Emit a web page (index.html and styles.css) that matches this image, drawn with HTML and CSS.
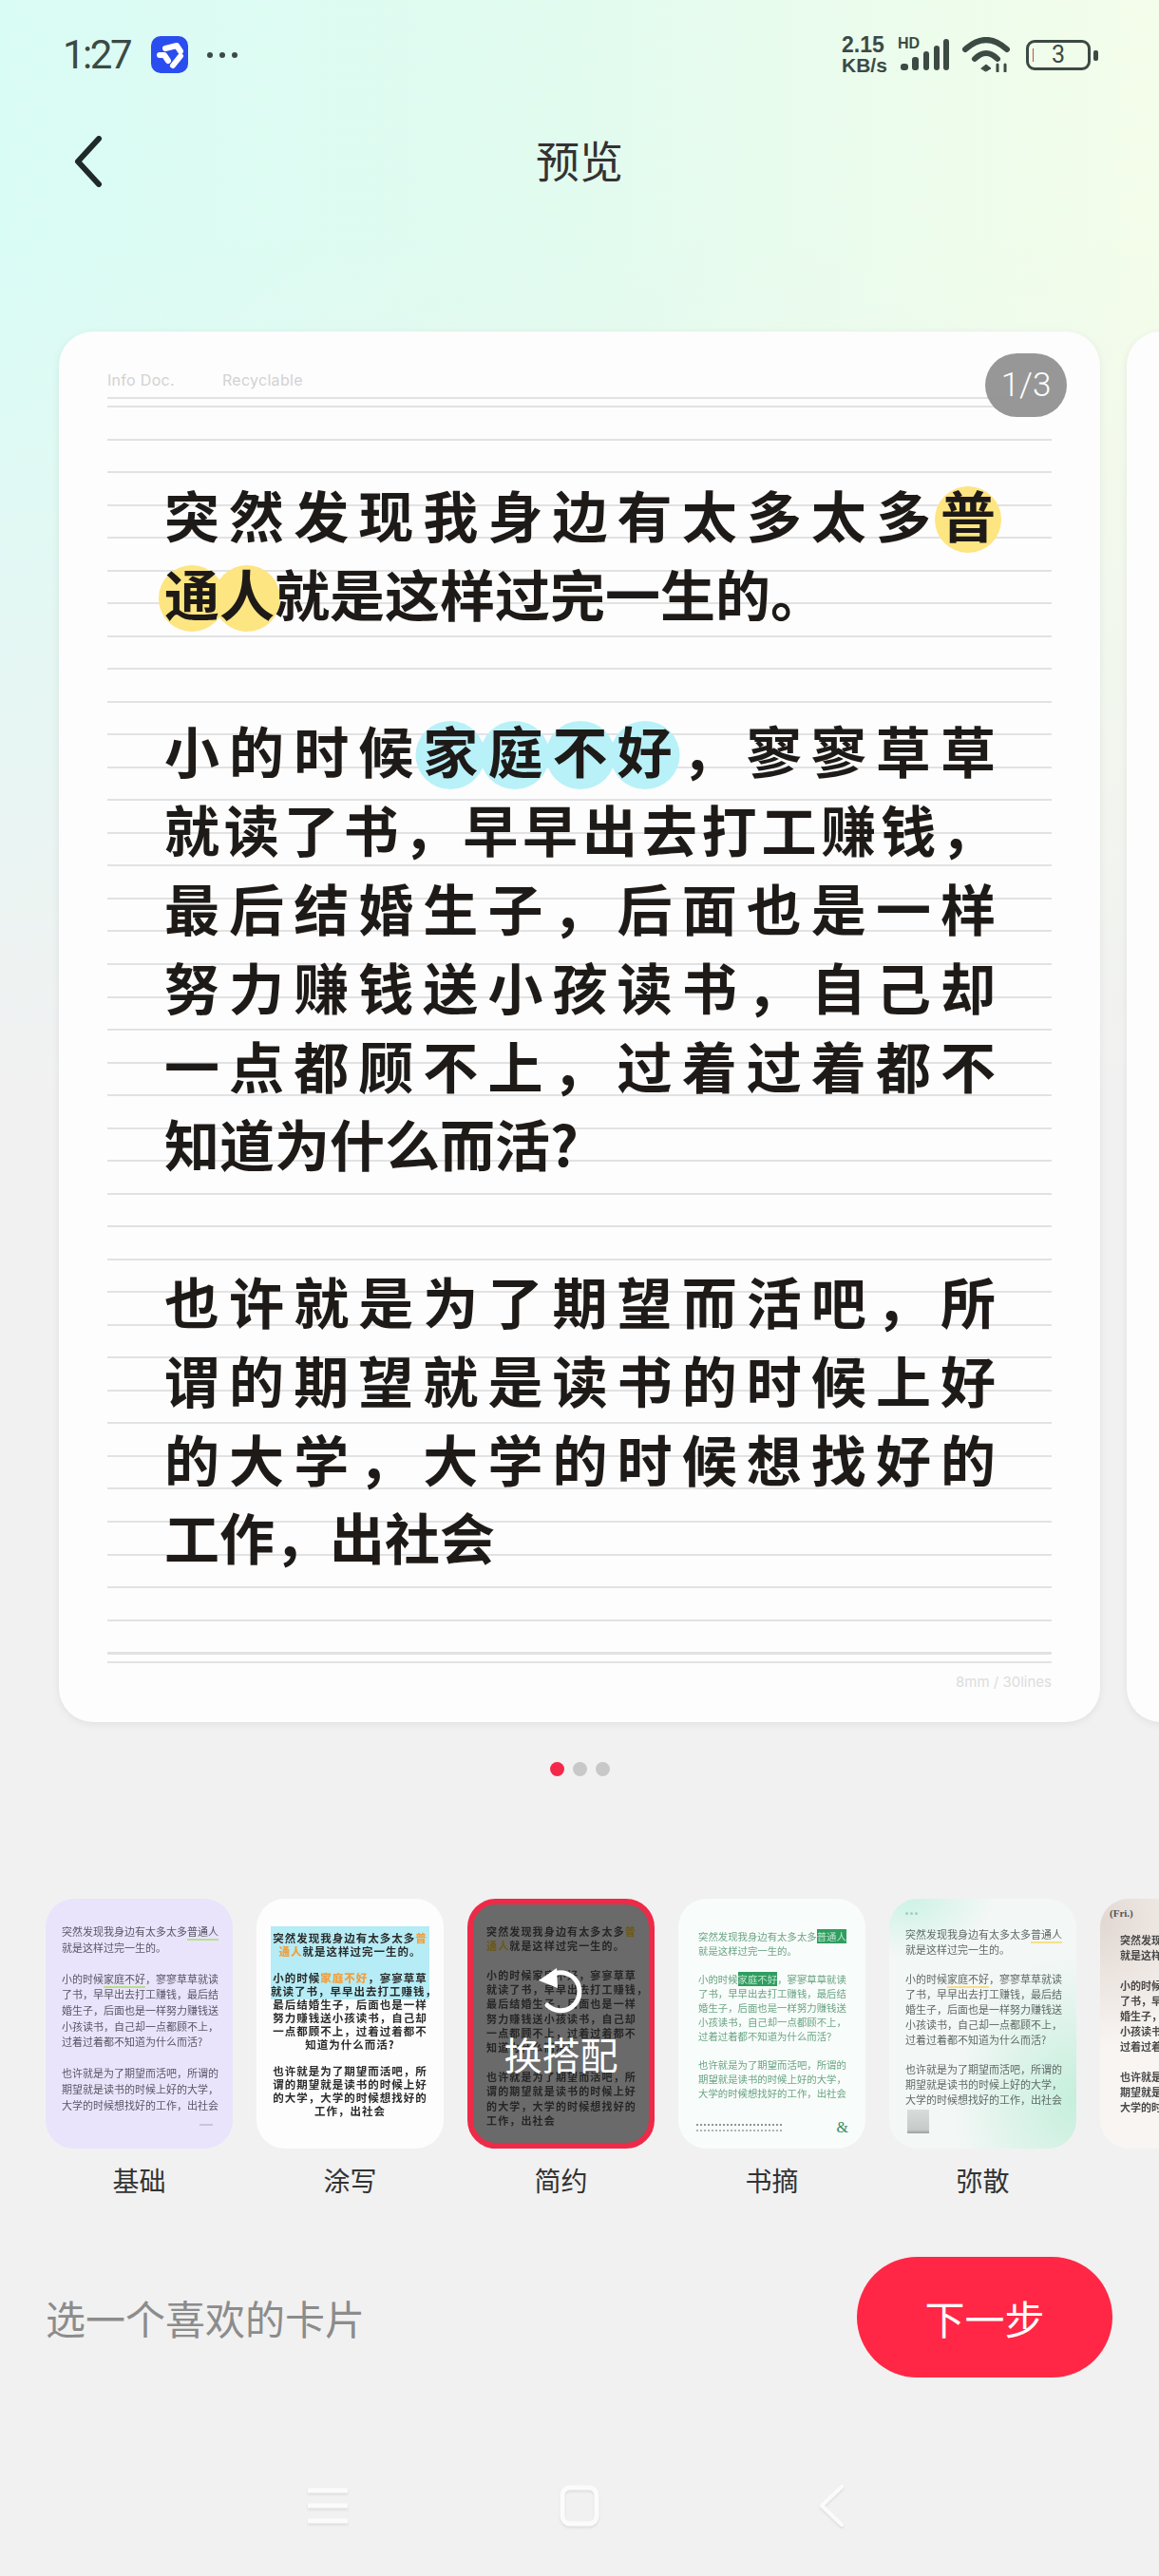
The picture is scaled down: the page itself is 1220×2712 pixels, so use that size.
FILE: index.html
```html
<!DOCTYPE html>
<html lang="zh-CN">
<head>
    <meta charset="UTF-8">
    <meta name="viewport" content="width=device-width, initial-scale=1.0">
    <title>预览</title>
    <link rel="stylesheet" href="styles.css">
</head>
<body>
    <div class="page">
        <div class="statusbar">
            <span class="time">1:27</span>
            <svg class="app-icon" width="39" height="39" viewBox="0 0 39 39">
                <rect width="39" height="39" rx="10" fill="#2a4df0"/>
                <path d="M15 13 L27 10 L31 16" fill="none" stroke="#fff" stroke-width="6" stroke-linejoin="round" stroke-linecap="round"/>
                <path d="M9 20 L14 20 L18 26" fill="none" stroke="#fff" stroke-width="6" stroke-linejoin="round" stroke-linecap="round"/>
                <path d="M31 21 L23 31" fill="none" stroke="#fff" stroke-width="6" stroke-linecap="round"/>
            </svg>
            <div class="more-dots"><i></i><i></i><i></i></div>
            <div class="status-right">
                <div class="speed">2.15<br><span>KB/s</span></div>
                <div class="signal">
                    <span class="hd">HD</span>
                    <svg width="52" height="33" viewBox="0 0 52 33" fill="#3c4a44">
                        <rect x="0" y="26" width="8" height="7" rx="3"/>
                        <rect x="12" y="19" width="7" height="14" rx="3"/>
                        <rect x="24" y="13" width="6" height="20" rx="3"/>
                        <rect x="35" y="7" width="6" height="26" rx="3"/>
                        <rect x="45" y="0" width="6" height="33" rx="3"/>
                    </svg>
                </div>
                <svg class="wifi" width="50" height="37" viewBox="0 0 50 37" fill="none" stroke="#3c4a44" stroke-linecap="round">
                    <path d="M3 13 Q25 -7 47 13" stroke-width="6"/>
                    <path d="M13 23 Q25 11 37 23" stroke-width="6"/>
                    <path d="M20 33 L25 29 L30 33 L25 36 Z" fill="#3c4a44" stroke-width="1"/>
                    <path d="M37 29 L37 36 M45 29 L45 36" stroke-width="3"/>
                </svg>
                <div class="battery">
                    <i class="battery-level"></i>
                    <span>3</span>
                </div>
            </div>
        </div>

        <div class="topbar">
            <svg class="back" width="32" height="54" viewBox="0 0 32 54" fill="none" stroke="#1f2a28" stroke-width="6" stroke-linecap="round" stroke-linejoin="round">
                <path d="M27 3 L5 27 L27 51"/>
            </svg>
            <div class="title">预览</div>
        </div>

        <div class="carousel">
            <div class="card">
                <div class="badge">1/3</div>
                <div class="meta"><span>Info Doc.</span><span>Recyclable</span></div>
                <div class="sheet">
                    <div class="ruled">
                        <p>
                            <span class="line">突然发现我身边有太多太多<span class="hl yellow">普</span></span>
                            <span class="line last"><span class="hl yellow">通</span><span class="hl yellow">人</span>就是这样过完一生的。</span>
                        </p>
                        <p>
                            <span class="line">小的时候<span class="hl blue">家</span><span class="hl blue">庭</span><span class="hl blue">不</span><span class="hl blue">好</span>，寥寥草草</span>
                            <span class="line">就读了书，早早出去打工赚钱，</span>
                            <span class="line">最后结婚生子，后面也是一样</span>
                            <span class="line">努力赚钱送小孩读书，自己却</span>
                            <span class="line">一点都顾不上，过着过着都不</span>
                            <span class="line last">知道为什么而活?</span>
                        </p>
                        <p>
                            <span class="line">也许就是为了期望而活吧，所</span>
                            <span class="line">谓的期望就是读书的时候上好</span>
                            <span class="line">的大学，大学的时候想找好的</span>
                            <span class="line last">工作，出社会</span>
                        </p>
                    </div>
                </div>
                <div class="card-foot">8mm / 30lines</div>
            </div>
            <div class="card"></div>
        </div>

        <div class="dots"><i class="on"></i><i></i><i></i></div>

        <div class="thumbs">
            <div class="thumb-item">
                <div class="thumb thumb-basic">
                    <p class="thumb-text">突然发现我身边有太多太多<u>普通人</u><br>就是这样过完一生的。<br><br>小的时候<u>家庭不好</u>，寥寥草草就读<br>了书，早早出去打工赚钱，最后结<br>婚生子，后面也是一样努力赚钱送<br>小孩读书，自己却一点都顾不上，<br>过着过着都不知道为什么而活?<br><br>也许就是为了期望而活吧，所谓的<br>期望就是读书的时候上好的大学，<br>大学的时候想找好的工作，出社会</p>
                    <i class="dash"></i>
                </div>
                <div class="thumb-label">基础</div>
            </div>
            <div class="thumb-item">
                <div class="thumb thumb-doodle">
                    <p class="thumb-text">突然发现我身边有太多太多<b>普</b><br><b>通人</b>就是这样过完一生的。<br><br>小的时候<b>家庭不好</b>，寥寥草草<br>就读了书，早早出去打工赚钱，<br>最后结婚生子，后面也是一样<br>努力赚钱送小孩读书，自己却<br>一点都顾不上，过着过着都不<br>知道为什么而活?<br><br>也许就是为了期望而活吧，所<br>谓的期望就是读书的时候上好<br>的大学，大学的时候想找好的<br>工作，出社会</p>
                </div>
                <div class="thumb-label">涂写</div>
            </div>
            <div class="thumb-item">
                <div class="thumb thumb-simple">
                    <p class="thumb-text">突然发现我身边有太多太多<b>普</b><br><b>通人</b>就是这样过完一生的。<br><br>小的时候家庭不好，寥寥草草<br>就读了书，早早出去打工赚钱，<br>最后结婚生子，后面也是一样<br>努力赚钱送小孩读书，自己却<br>一点都顾不上，过着过着都不<br>知道为什么而活?<br><br>也许就是为了期望而活吧，所<br>谓的期望就是读书的时候上好<br>的大学，大学的时候想找好的<br>工作，出社会</p>
                    <div class="swap">
                        <svg width="56" height="56" viewBox="0 0 56 56" fill="none" stroke="#fff" stroke-width="5">
                            <path d="M20 9 A20 20 0 1 1 13 42" stroke-linecap="round"/>
                            <path d="M4 16 L23 3 L24 24 Z" fill="#fff" stroke="none"/>
                        </svg>
                        <span>换搭配</span>
                    </div>
                </div>
                <div class="thumb-label">简约</div>
            </div>
            <div class="thumb-item">
                <div class="thumb thumb-note">
                    <p class="thumb-text">突然发现我身边有太多太多<b>普通人</b><br>就是这样过完一生的。<br><br>小的时候<b>家庭不好</b>，寥寥草草就读<br>了书，早早出去打工赚钱，最后结<br>婚生子，后面也是一样努力赚钱送<br>小孩读书，自己却一点都顾不上，<br>过着过着都不知道为什么而活？<br><br>也许就是为了期望而活吧，所谓的<br>期望就是读书的时候上好的大学，<br>大学的时候想找好的工作，出社会</p>
                    <div class="note-foot"><i></i><span>&amp;</span></div>
                </div>
                <div class="thumb-label">书摘</div>
            </div>
            <div class="thumb-item">
                <div class="thumb thumb-mist">
                    <div class="mist-head"><i></i><i></i><i></i></div>
                    <p class="thumb-text">突然发现我身边有太多太多<u>普通人</u><br>就是这样过完一生的。<br><br>小的时候<u>家庭不好</u>，寥寥草草就读<br>了书，早早出去打工赚钱，最后结<br>婚生子，后面也是一样努力赚钱送<br>小孩读书，自己却一点都顾不上，<br>过着过着都不知道为什么而活?<br><br>也许就是为了期望而活吧，所谓的<br>期望就是读书的时候上好的大学，<br>大学的时候想找好的工作，出社会</p>
                    <i class="mist-pic"></i>
                </div>
                <div class="thumb-label">弥散</div>
            </div>
            <div class="thumb-item">
                <div class="thumb thumb-warm">
                    <div class="warm-head">(Fri.)</div>
                    <p class="thumb-text">突然发现我身边有太多太多普通人<br>就是这样过完一生的。<br><br>小的时候家庭不好，寥寥草草就读<br>了书，早早出去打工赚钱，最后结<br>婚生子，后面也是一样努力赚钱送<br>小孩读书，自己却一点都顾不上，<br>过着过着都不知道为什么而活?<br><br>也许就是为了期望而活吧，所谓的<br>期望就是读书的时候上好的大学，<br>大学的时候想找好的工作，出社会</p>
                </div>
            </div>
        </div>

        <div class="footer">
            <span class="hint">选一个喜欢的卡片</span>
            <button class="next">下一步</button>
        </div>

        <div class="navbar">
            <svg width="44" height="40" viewBox="0 0 44 40" fill="none" stroke="#fbfbfb" stroke-width="5">
                <path d="M1 4 H43 M1 20 H43 M1 36 H43"/>
            </svg>
            <svg width="42" height="44" viewBox="0 0 42 44" fill="none" stroke="#fbfbfb" stroke-width="5">
                <rect x="3" y="3" width="36" height="38" rx="8"/>
            </svg>
            <svg width="28" height="46" viewBox="0 0 28 46" fill="none" stroke="#fbfbfb" stroke-width="4" stroke-linecap="round" stroke-linejoin="round">
                <path d="M25 3 L4 23 L25 43"/>
            </svg>
        </div>
    </div>
</body>
</html>
```

FILE: styles.css
```css
* {
    box-sizing: border-box;
}
html, body {
    margin: 0;
    padding: 0;
}
body {
    width: 1220px;
    height: 2712px;
    overflow: hidden;
    font-family: "Noto Sans CJK SC", "Noto Sans", sans-serif;
    background: #f1f1f1;
}
i {
    display: block;
}
p {
    margin: 0;
}
.page {
    width: 1220px;
    height: 2712px;
    overflow: hidden;
    display: flex;
    flex-direction: column;
    background:
        linear-gradient(to bottom, rgba(241, 241, 241, 0) 0, rgba(241, 241, 241, 0) 250px, #f1f1f1 1150px),
        linear-gradient(to right, #d9fcf5 0, #e2fbef 50%, #f4fdea 100%);
}

/* status bar */
.statusbar {
    flex: none;
    height: 100px;
    padding: 15px 65px 0 66px;
    display: flex;
    align-items: center;
    color: #3c4a44;
}
.time {
    font-family: Roboto, sans-serif;
    font-size: 42px;
    letter-spacing: -2.5px;
    line-height: 1;
    width: 93px;
}
.app-icon {
    flex: none;
}
.more-dots {
    display: flex;
    gap: 7px;
    margin-left: 20px;
}
.more-dots i {
    width: 6px;
    height: 6px;
    border-radius: 50%;
    background: #3c4a44;
}
.status-right {
    margin-left: auto;
    display: flex;
    align-items: center;
}
.speed {
    font-family: "Liberation Sans", sans-serif;
    font-weight: 700;
    font-size: 23px;
    line-height: 21px;
    width: 62px;
}
.speed span {
    font-size: 21px;
}
.signal {
    position: relative;
    width: 65px;
}
.signal svg {
    display: block;
}
.hd {
    position: absolute;
    left: -3px;
    top: -4px;
    font-family: "Liberation Sans", sans-serif;
    font-weight: 700;
    font-size: 16px;
}
.wifi {
    flex: none;
    margin-right: 17px;
}
.battery {
    position: relative;
    width: 68px;
    height: 32px;
    border: 3.5px solid #3c4a44;
    border-radius: 9px;
    display: flex;
    align-items: center;
    justify-content: center;
    font-family: Roboto, sans-serif;
    font-size: 25px;
    margin-right: 7px;
}
.battery::after {
    content: "";
    position: absolute;
    right: -11px;
    top: 8px;
    width: 5px;
    height: 11px;
    border-radius: 2px;
    background: #3c4a44;
}
.battery-level {
    position: absolute;
    left: 4px;
    top: 6px;
    width: 1px;
    height: 14px;
    background: #c0504a;
}

/* top bar */
.topbar {
    flex: none;
    height: 140px;
    padding: 0 77px;
    display: grid;
    grid-template-columns: 1fr auto 1fr;
    align-items: center;
}
.back {
    display: block;
}
.title {
    font-size: 46px;
    line-height: 60px;
    padding-bottom: 6px;
    color: #333;
    white-space: nowrap;
}

/* big card */
.carousel {
    flex: none;
    margin-top: 109px;
    padding-left: 62px;
    display: flex;
    gap: 28px;
}
.card {
    position: relative;
    flex: none;
    width: 1096px;
    height: 1464px;
    padding: 41px 51px 0 51px;
    background: #fdfdfd;
    border-radius: 36px;
    box-shadow: 0 2px 8px rgba(0, 0, 0, 0.07);
}
.badge {
    position: absolute;
    z-index: 1;
    top: 23px;
    right: 35px;
    width: 86px;
    height: 67px;
    border-radius: 34px;
    background: rgba(144, 144, 144, 0.94);
    color: #fff;
    font-family: Roboto, sans-serif;
    font-weight: 300;
    font-size: 35px;
    line-height: 67px;
    text-align: center;
}
.meta {
    height: 20px;
    margin-bottom: 8px;
    display: flex;
    gap: 50px;
    font-family: Inter, sans-serif;
    font-size: 16px;
    letter-spacing: 0.3px;
    line-height: 20px;
    color: #d2d2d2;
}
.sheet {
    height: 1333px;
    padding: 7px 0;
    border-top: 2px solid #e2e2e2;
    border-bottom: 2px solid #e2e2e2;
}
.ruled {
    isolation: isolate;
    height: 1315px;
    padding: 71px 59px 0 60px;
    border-top: 2px solid #e2e2e2;
    border-bottom: 2px solid #e2e2e2;
    background: repeating-linear-gradient(to bottom, transparent 0, transparent 32.53px, #e2e2e2 32.53px, #e2e2e2 34.53px);
    font-family: "Noto Sans CJK SC", sans-serif;
    font-weight: 700;
    font-size: 58px;
    line-height: 82.8px;
    color: #1e1a18;
}
.ruled p {
    margin-bottom: 82.8px;
}
.line {
    display: block;
    text-align: justify;
    text-align-last: justify;
    text-justify: inter-character;
}
.line.last {
    text-align-last: left;
}
.hl {
    position: relative;
}
.hl::before {
    content: "";
    position: absolute;
    z-index: -1;
    left: 50%;
    top: calc(50% + 6px);
    width: 70px;
    height: 70px;
    border-radius: 50%;
    transform: translate(-50%, -50%);
}
.yellow::before {
    background: #fde581;
}
.blue::before {
    left: calc(50% - 5px);
    width: 73px;
    height: 72px;
    background: #b8f1f8;
}
.card-foot {
    margin-top: 10px;
    font-family: Inter, sans-serif;
    font-size: 15px;
    line-height: 20px;
    color: #dcdcdc;
    text-align: right;
}

/* pager dots */
.dots {
    flex: none;
    margin-top: 42px;
    display: flex;
    justify-content: center;
    gap: 9px;
}
.dots i {
    width: 15px;
    height: 15px;
    border-radius: 50%;
    background: #c8c8c8;
}
.dots i.on {
    background: #f5284a;
}

/* style thumbnails */
.thumbs {
    flex: none;
    margin-top: 129px;
    padding-left: 48px;
    display: flex;
    gap: 25px;
}
.thumb-item {
    flex: none;
    width: 197px;
}
.thumb {
    position: relative;
    height: 263px;
    border-radius: 30px;
    overflow: hidden;
}
.thumb-label {
    font-size: 28px;
    line-height: 66px;
    color: #333;
    text-align: center;
}
.thumb-text {
    white-space: nowrap;
    filter: blur(0.6px);
}
.thumb-basic {
    padding: 26px 0 0 17px;
    background: #e9e4fb;
}
.thumb-basic .thumb-text {
    font-size: 11px;
    line-height: 16.6px;
    color: #5a5666;
}
.thumb-basic u {
    text-decoration: none;
    border-bottom: 2px solid #b6e08a;
}
.dash {
    position: absolute;
    right: 21px;
    bottom: 24px;
    width: 14px;
    height: 2px;
    background: #c9c5d6;
}
.thumb-doodle {
    padding: 29px 15px 0 15px;
    background: #fdfdfd;
}
.thumb-doodle .thumb-text {
    padding-top: 5px;
    font-size: 11.5px;
    font-weight: 700;
    letter-spacing: 1px;
    line-height: 14px;
    color: #2b2b2b;
    text-align: center;
    background: linear-gradient(to bottom, #b5ecf5 0, #b5ecf5 77px, transparent 77px);
}
.thumb-doodle b {
    color: #f0a040;
}
.thumb-simple {
    padding: 21px 0 0 14px;
    border: 6px solid #ee2a48;
    background: #6a6a6a;
}
.thumb-simple .thumb-text {
    font-size: 11px;
    font-weight: 700;
    letter-spacing: 1.15px;
    line-height: 15.3px;
    color: #262626;
}
.thumb-simple b {
    color: #6b5a20;
}
.swap {
    position: absolute;
    top: 0;
    left: 0;
    right: 0;
    padding-top: 64px;
    display: flex;
    flex-direction: column;
    align-items: center;
    gap: 12px;
    color: #fff;
    font-size: 40px;
    line-height: 50px;
}
.thumb-note {
    padding: 32px 0 0 21px;
    background: #f8fcfa;
}
.thumb-note .thumb-text {
    font-size: 10.4px;
    line-height: 15px;
    color: #6ba585;
}
.thumb-note b {
    font-weight: 400;
    background: #2f9e5f;
    color: #bfe5cf;
}
.note-foot {
    position: absolute;
    left: 19px;
    right: 18px;
    bottom: 13px;
    display: flex;
    align-items: center;
    justify-content: space-between;
    font-family: "Liberation Serif", serif;
    font-size: 16px;
    color: #3d8a60;
}
.note-foot i {
    width: 90px;
    height: 8px;
    border-top: 2px dotted #8a9a90;
    border-bottom: 2px dotted #a9b8b0;
}
.thumb-mist {
    padding: 10px 0 0 17px;
    background:
        radial-gradient(ellipse 90px 60px at 10% 0, #cdf3e5 0, rgba(205, 243, 229, 0) 100%),
        radial-gradient(ellipse 130px 150px at 100% 80%, #c5efdc 0, rgba(197, 239, 220, 0) 100%),
        #f3f7f6;
}
.thumb-mist .thumb-text {
    font-size: 11px;
    line-height: 15.8px;
    color: #5f6a66;
}
.thumb-mist u {
    text-decoration: none;
    border-bottom: 2px solid #f5e08a;
}
.mist-head {
    height: 12px;
    display: flex;
    gap: 2px;
    margin-bottom: 8px;
}
.mist-head i {
    width: 3px;
    height: 3px;
    margin-top: 4px;
    border-radius: 50%;
    background: #9fcfc0;
}
.mist-pic {
    position: absolute;
    left: 19px;
    bottom: 16px;
    width: 23px;
    height: 25px;
    background: linear-gradient(to bottom, #d8dcda 0, #c6cac8 85%, #9a9e9c 100%);
}
.thumb-warm {
    padding: 8px 0 0 21px;
    background:
        radial-gradient(ellipse 130px 130px at 0 10%, #e2d8d2 0, rgba(226, 216, 210, 0) 100%),
        #f8f5f2;
}
.warm-head {
    margin-left: -11px;
    font-family: "Liberation Serif", serif;
    font-weight: 700;
    font-size: 11px;
    line-height: 14px;
    color: #555;
    margin-bottom: 13px;
}
.thumb-warm .thumb-text {
    font-size: 11px;
    font-weight: 700;
    line-height: 16px;
    color: #4a4a4a;
}

/* bottom action */
.footer {
    flex: none;
    margin-top: 48px;
    padding: 0 49px 0 48px;
    display: flex;
    align-items: center;
    justify-content: space-between;
}
.hint {
    font-size: 42px;
    color: #8c8c8c;
    white-space: nowrap;
}
.next {
    width: 269px;
    height: 127px;
    border: none;
    border-radius: 64px;
    background: #ff2745;
    color: #fff;
    font-family: "Noto Sans CJK SC", sans-serif;
    font-size: 42px;
}

/* system nav */
.navbar {
    flex: none;
    margin-top: 112px;
    display: grid;
    grid-template-columns: 265px 265px 265px;
    justify-content: center;
    justify-items: center;
    align-items: center;
}
.navbar svg {
    display: block;
    filter: drop-shadow(0 2px 1px #dedede);
}
```
